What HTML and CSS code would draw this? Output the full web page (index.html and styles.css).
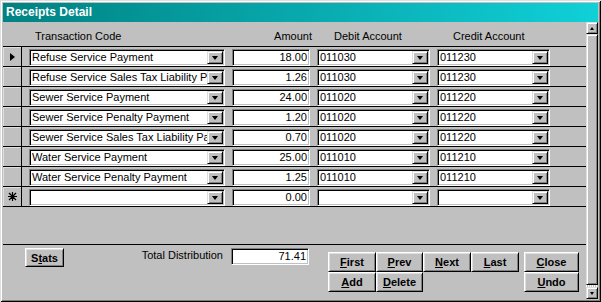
FILE: index.html
```html
<!DOCTYPE html>
<html lang="en">
<head>
  <meta charset="UTF-8" />
  <title>Receipts Detail</title>
  <link rel="stylesheet" href="styles.css">
</head>
<body>

  <div class="window">
    <div class="titlebar">Receipts Detail</div>

    <div class="client">
      <section class="form">

        <!-- column captions -->
        <div class="form-head">
          <div class="cap cap-code">Transaction Code</div>
          <div class="cap cap-amount">Amount</div>
          <div class="cap cap-debit">Debit Account</div>
          <div class="cap cap-credit">Credit Account</div>
        </div>

        <!-- detail records -->
        <div class="rows">
          <div class="row">
            <div class="selector"><span class="current"></span></div>
            <div class="field combo code"><span class="val">Refuse Service Payment</span><span class="drop"><i></i></span></div>
            <div class="field amount"><span class="val">18.00</span></div>
            <div class="field combo acct"><span class="val">011030</span><span class="drop"><i></i></span></div>
            <div class="field combo acct"><span class="val">011230</span><span class="drop"><i></i></span></div>
          </div>
          <div class="row">
            <div class="selector"></div>
            <div class="field combo code"><span class="val">Refuse Service Sales Tax Liability Payment</span><span class="drop"><i></i></span></div>
            <div class="field amount"><span class="val">1.26</span></div>
            <div class="field combo acct"><span class="val">011030</span><span class="drop"><i></i></span></div>
            <div class="field combo acct"><span class="val">011230</span><span class="drop"><i></i></span></div>
          </div>
          <div class="row">
            <div class="selector"></div>
            <div class="field combo code"><span class="val">Sewer Service Payment</span><span class="drop"><i></i></span></div>
            <div class="field amount"><span class="val">24.00</span></div>
            <div class="field combo acct"><span class="val">011020</span><span class="drop"><i></i></span></div>
            <div class="field combo acct"><span class="val">011220</span><span class="drop"><i></i></span></div>
          </div>
          <div class="row">
            <div class="selector"></div>
            <div class="field combo code"><span class="val">Sewer Service Penalty Payment</span><span class="drop"><i></i></span></div>
            <div class="field amount"><span class="val">1.20</span></div>
            <div class="field combo acct"><span class="val">011020</span><span class="drop"><i></i></span></div>
            <div class="field combo acct"><span class="val">011220</span><span class="drop"><i></i></span></div>
          </div>
          <div class="row">
            <div class="selector"></div>
            <div class="field combo code"><span class="val">Sewer Service Sales Tax Liability Payment</span><span class="drop"><i></i></span></div>
            <div class="field amount"><span class="val">0.70</span></div>
            <div class="field combo acct"><span class="val">011020</span><span class="drop"><i></i></span></div>
            <div class="field combo acct"><span class="val">011220</span><span class="drop"><i></i></span></div>
          </div>
          <div class="row">
            <div class="selector"></div>
            <div class="field combo code"><span class="val">Water Service Payment</span><span class="drop"><i></i></span></div>
            <div class="field amount"><span class="val">25.00</span></div>
            <div class="field combo acct"><span class="val">011010</span><span class="drop"><i></i></span></div>
            <div class="field combo acct"><span class="val">011210</span><span class="drop"><i></i></span></div>
          </div>
          <div class="row">
            <div class="selector"></div>
            <div class="field combo code"><span class="val">Water Service Penalty Payment</span><span class="drop"><i></i></span></div>
            <div class="field amount"><span class="val">1.25</span></div>
            <div class="field combo acct"><span class="val">011010</span><span class="drop"><i></i></span></div>
            <div class="field combo acct"><span class="val">011210</span><span class="drop"><i></i></span></div>
          </div>
          <div class="row last">
            <div class="selector">
              <svg class="newrec" width="9" height="9" viewBox="0 0 9 9">
                <path d="M4.5 0V9M0 4.5H9M1 1L8 8M8 1L1 8" stroke="#000" stroke-width="1.2" fill="none"/>
              </svg>
            </div>
            <div class="field combo code"><span class="val"></span><span class="drop"><i></i></span></div>
            <div class="field amount"><span class="val">0.00</span></div>
            <div class="field combo acct"><span class="val"></span><span class="drop"><i></i></span></div>
            <div class="field combo acct"><span class="val"></span><span class="drop"><i></i></span></div>
          </div>
        </div>

        <div class="spacer"></div>

        <!-- form footer -->
        <div class="form-foot">
          <button class="btn stats">S<u>t</u>ats</button>
          <div class="total-label">Total Distribution</div>
          <div class="field total"><span class="val">71.41</span></div>

          <div class="nav">
            <button class="btn"><u>F</u>irst</button>
            <button class="btn"><u>P</u>rev</button>
            <button class="btn"><u>N</u>ext</button>
            <button class="btn"><u>L</u>ast</button>
            <span></span>
            <button class="btn"><u>C</u>lose</button>
            <button class="btn"><u>A</u>dd</button>
            <button class="btn"><u>D</u>elete</button>
            <span></span>
            <span></span>
            <span></span>
            <button class="btn"><u>U</u>ndo</button>
          </div>
        </div>
      </section>

      <!-- vertical scroll bar -->
      <div class="vscroll">
        <div class="sb-btn"><i class="up"></i></div>
        <div class="sb-thumb"></div>
        <div class="sb-track"></div>
        <div class="sb-btn"><i class="down"></i></div>
      </div>
    </div>
  </div>

</body>
</html>
```

FILE: styles.css
```css
* {
  box-sizing: border-box;
}

body {
  margin: 0;
  background: #c0c0c0;
  font-family: "Liberation Sans", Arial, sans-serif;
  font-size: 11px;
  color: #000;
}

.window {
  width: 601px;
  height: 302px;
  padding: 3px 3px 3px 3px;
  display: flex;
  flex-direction: column;
  background: #c0c0c0;
  box-shadow: inset 1px 1px #dfdfdf, inset -1px -1px #000,
              inset 2px 2px #fff, inset -2px -2px #808080;
}

.titlebar {
  height: 19px;
  padding-left: 3px;
  line-height: 19px;
  font-size: 12px;
  font-weight: bold;
  color: #fff;
  background: linear-gradient(to right, #008282, #10d0d8);
}

.client {
  flex: 1;
  display: flex;
}

.form {
  width: 584px;
  display: flex;
  flex-direction: column;
}

/* column captions */

.form-head {
  height: 24px;
  display: flex;
  padding-left: 29px;
  padding-top: 8px;
}

.cap {
  line-height: 13px;
}

.cap-code {
  width: 203px;
  padding-left: 3px;
}

.cap-amount {
  width: 78px;
  text-align: right;
  padding-right: 1px;
}

.cap-debit {
  width: 120px;
  padding-left: 21px;
}

.cap-credit {
  width: 113px;
  padding-left: 20px;
}

/* records */

.row {
  height: 20px;
  display: flex;
  border-top: 1px solid #000;
}

.row.last {
  height: 21px;
  border-bottom: 1px solid #000;
}

.selector {
  width: 19px;
  border-right: 1px solid #000;
  display: flex;
  align-items: center;
  justify-content: center;
  box-shadow: inset 1px 1px #dfdfdf;
}

.current {
  width: 0;
  height: 0;
  margin-left: 1px;
  border-left: 5px solid #000;
  border-top: 4.5px solid transparent;
  border-bottom: 4.5px solid transparent;
}

.newrec {
  margin-left: 1px;
}

.row .field {
  margin-top: 2px;
  margin-left: 7px;
}

.field {
  height: 17px;
  display: flex;
  background: #fff;
  border: 1px solid;
  border-color: #808080 #fff #fff #808080;
  box-shadow: inset 1px 1px #000, inset -1px -1px #c0c0c0;
  padding: 1px;
}

.field .val {
  flex: 1;
  padding-left: 1px;
  line-height: 13px;
  white-space: nowrap;
  overflow: hidden;
}

.code {
  width: 196px;
}

.amount {
  width: 78px;
}

.acct {
  width: 113px;
}

.amount .val,
.total .val {
  text-align: right;
  padding-right: 1px;
}

.drop {
  width: 16px;
  height: 13px;
  flex: none;
  display: flex;
  align-items: center;
  justify-content: center;
  background: #c0c0c0;
  border: 1px solid;
  border-color: #dfdfdf #000 #000 #dfdfdf;
  box-shadow: inset 1px 1px #fff, inset -1px -1px #808080;
}

.drop i {
  width: 1px;
  height: 0;
  border-left: 3px solid transparent;
  border-right: 3px solid transparent;
  border-top: 4px solid #000;
  margin-top: 1px;
}

.spacer {
  flex: 1;
}

/* footer */

.form-foot {
  height: 55px;
  border-top: 1px solid #000;
  display: flex;
  align-items: flex-start;
}

.btn {
  height: 20px;
  padding: 0;
  font-family: "Liberation Sans", Arial, sans-serif;
  font-size: 11px;
  font-weight: bold;
  color: #000;
  background: #c0c0c0;
  border: 1px solid;
  border-color: #fff #000 #000 #fff;
  box-shadow: inset 1px 1px #dfdfdf, inset -1px -1px #808080;
}

.stats {
  width: 39px;
  height: 19px;
  margin-left: 22px;
  margin-top: 3px;
}

.total-label {
  width: 160px;
  margin-top: 4px;
  padding-right: 1px;
  text-align: right;
  line-height: 13px;
}

.total {
  width: 78px;
  margin-left: 7px;
  margin-top: 3px;
}

.nav {
  margin-left: 19px;
  margin-top: 7px;
  display: grid;
  grid-template-columns: 48px 47px 48px 48px 5px 55px;
  grid-template-rows: 20px 20px;
}

/* scroll bar */

.vscroll {
  width: 12px;
  display: flex;
  flex-direction: column;
}

.sb-btn {
  height: 12px;
  display: flex;
  align-items: center;
  justify-content: center;
  background: #c0c0c0;
  border: 1px solid;
  border-color: #dfdfdf #000 #000 #dfdfdf;
  box-shadow: inset 1px 1px #fff, inset -1px -1px #808080;
}

.sb-btn i {
  width: 1px;
  height: 0;
  border-left: 2px solid transparent;
  border-right: 2px solid transparent;
}

.sb-btn .up {
  border-bottom: 3px solid #000;
}

.sb-btn .down {
  border-top: 3px solid #000;
}

.sb-thumb {
  flex: 1;
  background: #c0c0c0;
  border: 1px solid;
  border-color: #dfdfdf #000 #000 #dfdfdf;
  box-shadow: inset 1px 1px #fff, inset -1px -1px #808080;
}

.sb-track {
  height: 2px;
  background: repeating-linear-gradient(to right, #fff 0 1px, #c0c0c0 1px 2px);
}
```
